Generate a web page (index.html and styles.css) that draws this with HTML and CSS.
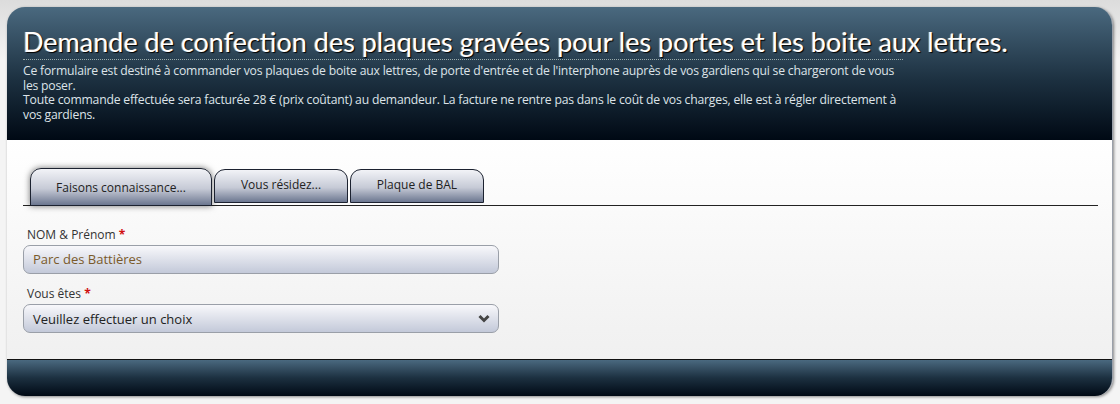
FILE: index.html
```html
<!DOCTYPE html>
<html lang="fr">
<head>
    <meta charset="UTF-8">
    <title>Plaques gravées</title>
    <link rel="stylesheet" href="styles.css">
</head>
<body>
    <div class="panel">
        <div class="panel-head">
            <h1>Demande de confection des plaques gravées pour les portes et les boite aux lettres.</h1>
            <p>Ce formulaire est destiné à commander vos plaques de boite aux lettres, de porte d'entrée et de l'interphone auprès de vos gardiens qui se chargeront de vous les poser.<br>
            Toute commande effectuée sera facturée 28 € (prix coûtant) au demandeur. La facture ne rentre pas dans le coût de vos charges, elle est à régler directement à vos gardiens.</p>
        </div>

        <div class="panel-body">
            <div class="tabs">
                <div class="tab active">Faisons connaissance...</div>
                <div class="tab">Vous résidez...</div>
                <div class="tab">Plaque de BAL</div>
            </div>

            <div class="field">
                <label>NOM &amp; Prénom <span class="req">*</span></label>
                <div class="input">Parc des Battières</div>
            </div>

            <div class="field">
                <label>Vous êtes <span class="req">*</span></label>
                <div class="input select">
                    <span>Veuillez effectuer un choix</span>
                    <svg width="12" height="9" viewBox="0 0 12 9"><path d="M1.5 2 L6 6.5 L10.5 2" fill="none" stroke="#444" stroke-width="3"/></svg>
                </div>
            </div>
        </div>

        <div class="panel-foot"></div>
    </div>
</body>
</html>
```

FILE: styles.css
```css
body {
    margin: 0;
    padding: 7px 7px 8px 7px;
    background: linear-gradient(to bottom, #dcdcdc, #f4f4f4 60px, #f4f4f4);
    font-family: 'Open Sans', sans-serif;
}

.panel {
    border-radius: 18px;
    overflow: hidden;
    box-shadow: 1px 1px 3px rgba(0,0,0,0.45);
    border-right: 1px solid #9aa0aa;
}

/* Header */
.panel-head {
    background: linear-gradient(to bottom, #4a697f, #1c3040 55%, #000914);
    padding: 17px 20px 14px 16px;
    height: 102px;
}

h1 {
    margin: 0;
    display: inline-block;
    font-family: 'Lato', sans-serif;
    font-size: 27px;
    font-weight: normal;
    color: #fff;
    line-height: 35px;
    text-shadow: 1px 1px 1px #000, -1px 0 0 rgba(255,190,120,0.5);
    border-bottom: 1px dotted #9aa;
    width: 880px;
    white-space: nowrap;
}

.panel-head p {
    margin: 4px 0 0 0;
    width: 877px;
    font-size: 12.2px;
    line-height: 14.6px;
    color: #dde3e8;
    letter-spacing: -0.2px;
}

/* Body */
.panel-body {
    background: linear-gradient(to bottom, #fff, #f0f0f0);
    padding: 28px 14px 25px 16px;
    height: 166px;
    border-bottom: 1px solid #111;
}

.tabs {
    display: flex;
    align-items: flex-end;
    gap: 2px;
    padding-left: 7px;
    border-bottom: 1px solid #222;
    height: 37px;
    margin-bottom: 20px;
}

.tab {
    box-sizing: border-box;
    width: 134px;
    height: 34px;
    margin-bottom: 2px;
    padding-top: 6px;
    text-align: center;
    font-size: 12px;
    color: #222;
    background: linear-gradient(to bottom, #f2f3f7, #c6cad6 55%, #6c7790);
    border: 1px solid #1c2230;
    border-radius: 11px 11px 0 0;
}

.tab.active {
    width: 182px;
    height: 38px;
    margin-bottom: -1px;
    padding-top: 10px;
    box-shadow: 0 0 6px rgba(0,0,0,0.55);
}

.field {
    margin-bottom: 11px;
}

.field label {
    display: block;
    font-size: 12px;
    color: #333;
    padding-left: 4px;
    margin-bottom: 2px;
}

.req {
    color: #d01010;
    font-weight: bold;
}

.input {
    box-sizing: border-box;
    width: 476px;
    height: 29px;
    padding: 4px 9px;
    font-size: 13px;
    color: #7a5a2a;
    background: linear-gradient(to bottom, #f8f8fb, #c3c9d9);
    border: 1px solid #9a9fa8;
    border-radius: 7px;
}

.select {
    display: flex;
    justify-content: space-between;
    align-items: center;
    color: #222;
    padding-right: 8px;
}

/* Footer */
.panel-foot {
    height: 36px;
    background: linear-gradient(to bottom, #4a697f, #1c3040 50%, #000914);
}
```
